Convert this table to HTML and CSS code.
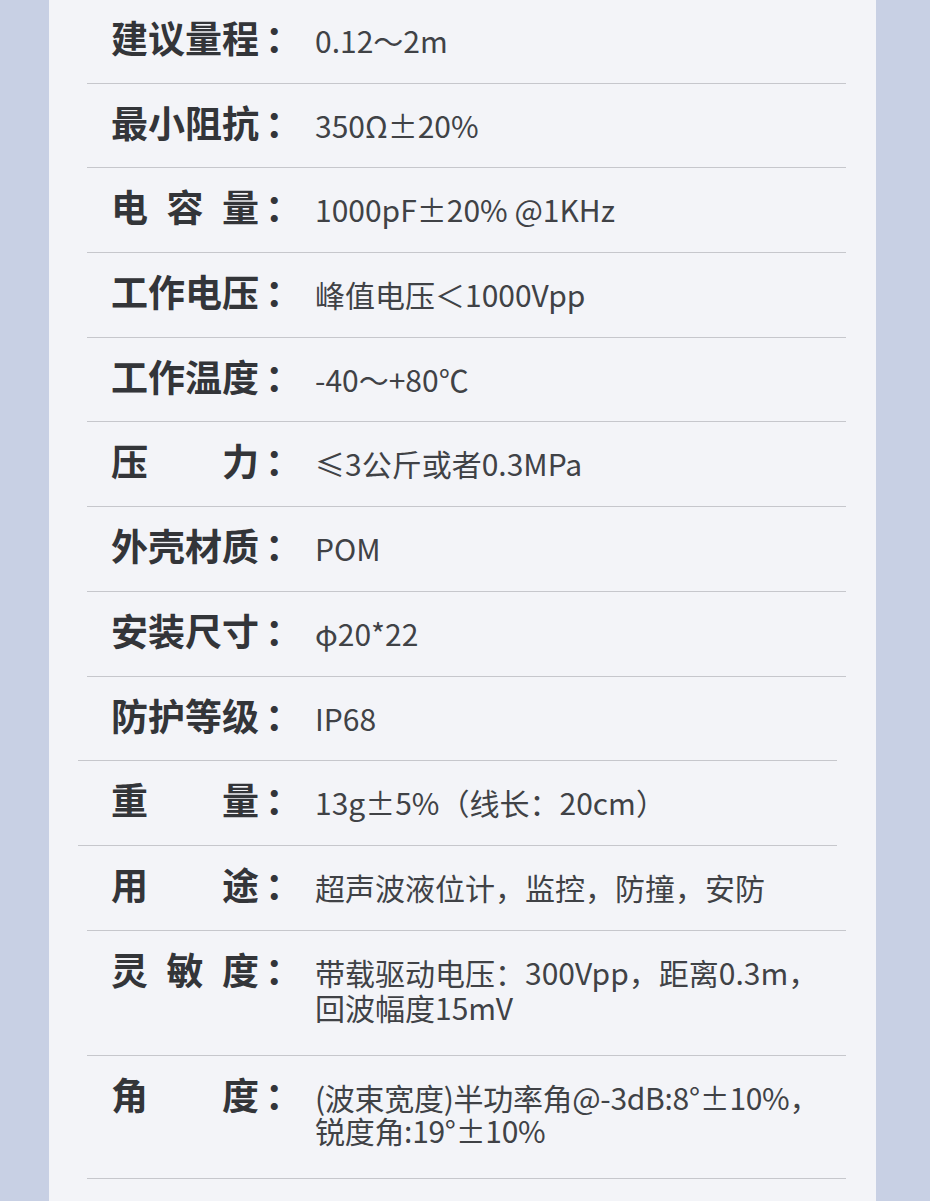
FILE: index.html
```html
<!DOCTYPE html>
<html lang="zh-CN">
<head>
<meta charset="utf-8">
<title>参数</title>
<link rel="stylesheet" href="styles.css">
</head>
<body>
<div class="panel">
  <div class="row">
    <div class="label"><span class="chars"><span>建</span><span>议</span><span>量</span><span>程</span></span><span class="colon">：</span></div>
    <div class="value">0.12～2m</div>
  </div>
  <div class="row">
    <div class="label"><span class="chars"><span>最</span><span>小</span><span>阻</span><span>抗</span></span><span class="colon">：</span></div>
    <div class="value">350Ω±20%</div>
  </div>
  <div class="row">
    <div class="label"><span class="chars"><span>电</span><span>容</span><span>量</span></span><span class="colon">：</span></div>
    <div class="value">1000pF±20% @1KHz</div>
  </div>
  <div class="row">
    <div class="label"><span class="chars"><span>工</span><span>作</span><span>电</span><span>压</span></span><span class="colon">：</span></div>
    <div class="value">峰值电压＜1000Vpp</div>
  </div>
  <div class="row">
    <div class="label"><span class="chars"><span>工</span><span>作</span><span>温</span><span>度</span></span><span class="colon">：</span></div>
    <div class="value">-40～+80℃</div>
  </div>
  <div class="row">
    <div class="label"><span class="chars"><span>压</span><span>力</span></span><span class="colon">：</span></div>
    <div class="value">≤3公斤或者0.3MPa</div>
  </div>
  <div class="row">
    <div class="label"><span class="chars"><span>外</span><span>壳</span><span>材</span><span>质</span></span><span class="colon">：</span></div>
    <div class="value">POM</div>
  </div>
  <div class="row">
    <div class="label"><span class="chars"><span>安</span><span>装</span><span>尺</span><span>寸</span></span><span class="colon">：</span></div>
    <div class="value">φ20*22</div>
  </div>
  <div class="row row--offset">
    <div class="label"><span class="chars"><span>防</span><span>护</span><span>等</span><span>级</span></span><span class="colon">：</span></div>
    <div class="value">IP68</div>
  </div>
  <div class="row row--offset">
    <div class="label"><span class="chars"><span>重</span><span>量</span></span><span class="colon">：</span></div>
    <div class="value">13g±5%（线长：20cm）</div>
  </div>
  <div class="row">
    <div class="label"><span class="chars"><span>用</span><span>途</span></span><span class="colon">：</span></div>
    <div class="value">超声波液位计，监控，防撞，安防</div>
  </div>
  <div class="row row--multi">
    <div class="label"><span class="chars"><span>灵</span><span>敏</span><span>度</span></span><span class="colon">：</span></div>
    <div class="value">带载驱动电压：300Vpp，距离0.3m，<br>回波幅度15mV</div>
  </div>
  <div class="row row--multi row--last">
    <div class="label"><span class="chars"><span>角</span><span>度</span></span><span class="colon">：</span></div>
    <div class="value value--tight">(波束宽度)半功率角@-3dB:8°±10%，<br>锐度角:19°±10%</div>
  </div>
</div>
</body>
</html>
```

FILE: styles.css
```css
html, body {
  margin: 0;
  padding: 0;
}

body {
  background: #c8d0e4;
  font-family: "Noto Sans CJK SC", "Noto Sans", sans-serif;
  color: #333;
}

.panel {
  margin-left: 49px;
  width: 827px;
  min-height: 1201px;
  background: #f3f4f8;
  padding: 0 30px 0 38px;
  box-sizing: border-box;
}

.row {
  display: flex;
  align-items: baseline;
  padding: 17px 0 24.7px 24px;
  border-bottom: 1px solid #c6c7cc;
}

.row:first-child {
  padding-top: 16px;
}

.row--offset {
  margin-left: -9px;
  margin-right: 9px;
  padding-left: 33px;
}

.row--multi {
  padding-bottom: 30px;
}

.row--last {
  padding-bottom: 31px;
}

.label {
  display: flex;
  align-items: baseline;
  flex: none;
  font-size: 37px;
  line-height: 42px;
  font-weight: 700;
  color: #333539;
}

.chars {
  display: flex;
  justify-content: space-between;
  width: 148px;
}

.colon {
  width: 37px;
  margin-left: 6px;
}

.value {
  margin-left: 13px;
  font-size: 30px;
  line-height: 35px;
  font-weight: 400;
  color: #404246;
}

.value--tight {
  line-height: 33px;
  letter-spacing: -0.3px;
  white-space: nowrap;
}
```
